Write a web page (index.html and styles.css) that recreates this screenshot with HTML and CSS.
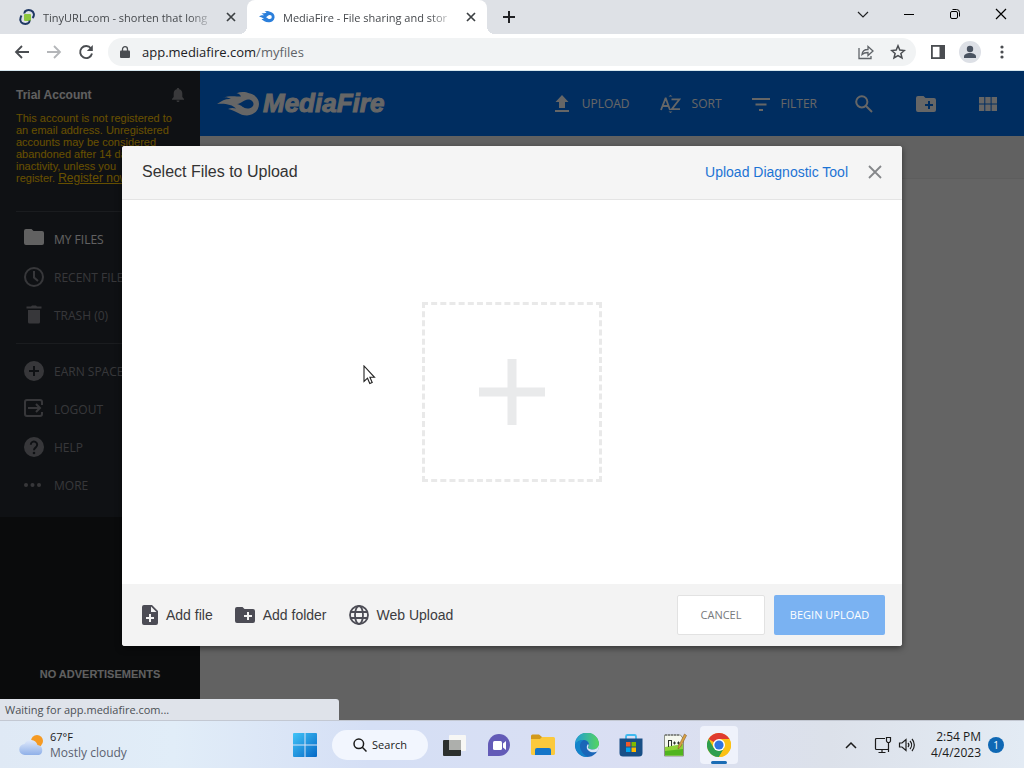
FILE: index.html
```html
<!DOCTYPE html>
<html lang="en">
<head>
    <meta charset="UTF-8">
    <meta name="viewport" content="width=device-width, initial-scale=1.0">
    <title>MediaFire - File sharing and storage made simple</title>
    <link rel="stylesheet" href="styles.css">
</head>
<body>
    <!-- Browser tabs -->
    <div class="tabstrip">
        <div class="tab">
            <svg class="favicon" viewBox="0 0 16 16" width="16" height="16">
                <rect x="5" y="5" width="7" height="7" rx="1" fill="#8cc63e"/>
                <path d="M5.500 4.500C5 1.500 9 .5 12 1.500s4 5 1.500 7.500M10.500 11.500c.5 3-3.500 4-6.500 3S.5 10 2.500 6.500" fill="none" stroke="#1f3864" stroke-width="2"/>
            </svg>
            <span class="tab-title">TinyURL.com - shorten that long</span>
            <button class="tab-close" aria-label="Close tab">
                <svg viewBox="0 0 10 10" width="10" height="10"><path d="M1 1l8 8M9 1L1 9" stroke="#3c4043" stroke-width="1.700"/></svg>
            </button>
        </div>
        <div class="tab active">
            <svg class="favicon" viewBox="0 0 16 16" width="16" height="16">
                <path fill-rule="evenodd" d="M0 7.500C1.500 6.300 3.500 6 5 6.300 4.300 5.500 3.500 5 2.500 4.800 4.500 4 6 4.100 7.500 4 7 3.200 6.500 2.900 5.500 2.600c2-.8 4-.6 5.500.1A5.300 5.300 0 1 1 9.500 13.200C6 13.200 4.500 11.500 2.500 10.500c1-.5 2-.5 3-.2C4 9 2 8 0 7.500zM7 8.200c1.500.6 2.300 1.900 3.800 1.900a2 2 0 0 0 0-4C9.300 6.100 8.500 7.600 7 8.200z" fill="#2b7fdb"/>
            </svg>
            <span class="tab-title">MediaFire - File sharing and stor</span>
            <button class="tab-close" aria-label="Close tab">
                <svg viewBox="0 0 10 10" width="10" height="10"><path d="M1 1l8 8M9 1L1 9" stroke="#3c4043" stroke-width="1.700"/></svg>
            </button>
        </div>
        <button class="new-tab" aria-label="New tab">
            <svg viewBox="0 0 12 12" width="12" height="12"><path d="M6 0v12M0 6h12" stroke="#202124" stroke-width="2"/></svg>
        </button>
        <div class="window-controls">
            <button aria-label="Search tabs"><svg viewBox="0 0 12 12" width="12" height="12"><path d="M1 4l5 5 5-5" fill="none" stroke="#202124" stroke-width="1.200"/></svg></button>
            <button aria-label="Minimize"><svg viewBox="0 0 12 12" width="12" height="12"><path d="M1 6.500h10" stroke="#000"/></svg></button>
            <button aria-label="Restore"><svg viewBox="0 0 12 12" width="12" height="12"><rect x="1.500" y="3.500" width="7" height="7" rx="1.500" fill="none" stroke="#000"/><path d="M3.500 1.500h4a3 3 0 0 1 3 3v4" fill="none" stroke="#000"/></svg></button>
            <button aria-label="Close"><svg viewBox="0 0 12 12" width="12" height="12"><path d="M1 1l10 10M11 1L1 11" stroke="#000" stroke-width="1.200"/></svg></button>
        </div>
    </div>

    <!-- Address bar -->
    <div class="toolbar">
        <button aria-label="Back"><svg viewBox="0 0 16 16" width="16" height="16"><path d="M15 8H2M8 2L2 8l6 6" fill="none" stroke="#4a4d51" stroke-width="1.800"/></svg></button>
        <button aria-label="Forward"><svg viewBox="0 0 16 16" width="16" height="16"><path d="M1 8h13M8 2l6 6-6 6" fill="none" stroke="#b4b6b9" stroke-width="1.800"/></svg></button>
        <button aria-label="Reload"><svg viewBox="0 0 16 16" width="16" height="16"><path d="M13 4.500A6 6 0 1 0 14 9.500" fill="none" stroke="#4a4d51" stroke-width="1.900"/><path d="M14.800 1v6h-6z" fill="#4a4d51"/></svg></button>
        <div class="omnibox">
            <svg viewBox="0 0 10 12" width="10" height="12"><rect x="0" y="4.500" width="10" height="7.500" rx="1" fill="#4a4d51"/><path d="M2.500 5V3.200a2.500 2.500 0 0 1 5 0V5" fill="none" stroke="#4a4d51" stroke-width="1.300"/></svg>
            <span class="url">app.mediafire.com<span>/myfiles</span></span>
            <button aria-label="Share"><svg viewBox="0 0 16 16" width="16" height="16"><path d="M1 4v10.500h12V12M4 10.500c.3-3.500 2.500-5 6-5V2.500l5 4.500-5 4.500v-3c-2.700 0-4.500.5-6 2z" fill="none" stroke="#5f6368" stroke-width="1.300"/></svg></button>
            <button aria-label="Bookmark"><svg viewBox="0 0 16 16" width="16" height="16"><path d="M8 1.800l1.800 4.300 4.600.4-3.500 3 1.100 4.500L8 11.600 4 14l1.100-4.500-3.500-3 4.600-.4z" fill="none" stroke="#4a4d51" stroke-width="1.500"/></svg></button>
        </div>
        <button aria-label="Side panel"><svg viewBox="0 0 16 16" width="16" height="16"><rect x="1.900" y="1.900" width="12.200" height="12.200" fill="none" stroke="#4a4d51" stroke-width="1.800"/><path d="M9.500 2H14v12H9.500z" fill="#4a4d51"/></svg></button>
        <button aria-label="Profile"><svg viewBox="0 0 22 22" width="22" height="22"><circle cx="11" cy="11" r="11" fill="#dde0e6"/><circle cx="11" cy="8" r="3.200" fill="#4a5361"/><path d="M5 17v-1.500c0-2.300 3-3.500 6-3.500s6 1.200 6 3.500V17z" fill="#4a5361"/></svg></button>
        <button aria-label="Menu"><svg viewBox="0 0 16 16" width="16" height="16" fill="#4a4d51"><circle cx="8" cy="3" r="1.600"/><circle cx="8" cy="8" r="1.600"/><circle cx="8" cy="13" r="1.600"/></svg></button>
    </div>

    <!-- MediaFire -->
    <div class="page">
        <aside class="sidebar">
            <div class="sidebar-panel">
                <div class="account">
                    <div class="account-head">
                        <h2>Trial Account</h2>
                        <svg viewBox="0 0 12 14" width="12" height="14" fill="#8e9094"><path d="M6 0c.8 0 1.200.5 1.200 1.200C9.300 1.700 10.300 3.500 10.300 5.500V9L12 11v.8H0V11l1.700-2V5.500c0-2 1-3.800 3.100-4.300C4.800.5 5.200 0 6 0zM4.500 12.500h3a1.500 1.500 0 0 1-3 0z"/></svg>
                    </div>
                    <p class="warning">This account is not registered to an email address. Unregistered accounts may be considered abandoned after 14 days of inactivity, unless you<br>register. <a href="#">Register now</a></p>
                </div>
                <ul class="menu">
                    <li><a class="current" href="#"><svg viewBox="0 0 20 20" width="20" height="20" fill="currentColor"><path d="M2 0h5.500l2 2H18a2 2 0 0 1 2 2v10a2 2 0 0 1-2 2H2a2 2 0 0 1-2-2V2a2 2 0 0 1 2-2z"/></svg>MY FILES</a></li>
                    <li><a href="#"><svg viewBox="0 0 20 20" width="20" height="20" fill="none" stroke="currentColor" stroke-width="2"><circle cx="10" cy="10" r="9"/><path d="M10 4v6.500l4 3.500"/></svg>RECENT FILES</a></li>
                    <li><a href="#"><svg viewBox="0 0 20 20" width="20" height="20" fill="currentColor"><path d="M4 5h12v12a1.500 1.500 0 0 1-1.500 1.500h-9A1.500 1.500 0 0 1 4 17zM2.500 1.500H7l1-1h4l1 1h4.500v2h-15z"/></svg>TRASH (0)</a></li>
                </ul>
                <ul class="menu">
                    <li><a href="#"><svg viewBox="0 0 20 20" width="20" height="20" fill="currentColor"><path fill-rule="evenodd" d="M10 0a10 10 0 1 1 0 20 10 10 0 0 1 0-20zM9 5v4H5v2h4v4h2v-4h4V9h-4V5z"/></svg>EARN SPACE</a></li>
                    <li><a href="#"><svg viewBox="0 0 20 20" width="20" height="20" fill="none" stroke="currentColor" stroke-width="2"><path d="M18 6V3a2 2 0 0 0-2-2H3a2 2 0 0 0-2 2v12a2 2 0 0 0 2 2h13a2 2 0 0 0 2-2v-2M4 9h12M12 5l4 4-4 4"/></svg>LOGOUT</a></li>
                    <li><a href="#"><svg viewBox="0 0 20 20" width="20" height="20"><circle cx="10" cy="10" r="10" fill="currentColor"/><path d="M6.800 7.800a3.200 3.200 0 1 1 5 2.500C10.600 11.200 10 11.600 10 13.300" fill="none" stroke="#272b33" stroke-width="2"/><circle cx="10" cy="16" r="1.300" fill="#272b33"/></svg>HELP</a></li>
                    <li><a href="#"><svg viewBox="0 0 20 20" width="20" height="20" fill="currentColor"><circle cx="2" cy="10" r="2"/><circle cx="8.500" cy="10" r="2"/><circle cx="15" cy="10" r="2"/></svg>MORE</a></li>
                </ul>
            </div>
            <p class="no-ads">NO ADVERTISEMENTS</p>
        </aside>

        <main class="main">
            <header class="header">
                <a class="logo" href="#">
                    <svg viewBox="0 0 42 24" width="42" height="24"><path fill-rule="evenodd" d="M0 12C5 8.500 9 6.500 14 7 11.500 5.500 8 5 6 5.500 12 3.500 19 4.500 24 4.500 23.500 2.500 21.500 1.500 19.500 1.200 24-.5 29 0 32 1.200 38 2.500 42 6.500 42 12S37.500 23.500 30 23.500C22 23.500 19.500 18.500 11 17c3-1.500 6-1 8-.5C15.500 12.500 7 11 0 12zm20 0c5 1 6 4.500 10.500 4.500 3.500 0 6-2 6-4.500s-2.500-4.500-5.500-4.500c-4 0-6 4-11 4.500z" fill="#fff"/></svg>
                    <span>MediaFire</span>
                </a>
                <nav class="actions">
                    <button><svg viewBox="0 0 18 18" width="18" height="18" fill="#fff"><path d="M9 0l6.500 7H12v6H6V7H2.500zM2 15h14v2H2z"/></svg>UPLOAD</button>
                    <button><svg class="az" viewBox="0 0 21 18" width="21" height="18" fill="none" stroke="#fff" stroke-width="1.800"><path d="M1 15L5.500 3.500h.3L10 15M2.500 11h6.300M11.500 4.300h8L11.800 14.200H20"/><path d="M8.500 1.500L10.500 0l2 1.500zM8.500 16.500l2 1.500 2-1.500z" fill="#fff" stroke="none"/></svg>SORT</button>
                    <button><svg viewBox="0 0 18 18" width="18" height="18" fill="#fff"><path d="M0 3h18v2H0zM3.500 8.500h11v2h-11zM7 14h4v2H7z"/></svg>FILTER</button>
                    <button class="icon-only" aria-label="Search"><svg viewBox="0 0 18 18" width="18" height="18" fill="none" stroke="#fff" stroke-width="2"><circle cx="6.800" cy="6.800" r="5.600"/><path d="M11 11l6 6"/></svg></button>
                    <button class="icon-only" aria-label="New folder"><svg viewBox="0 0 20 16" width="20" height="16" fill="#fff"><path fill-rule="evenodd" d="M2 0h5.500l2 2H18a2 2 0 0 1 2 2v10a2 2 0 0 1-2 2H2a2 2 0 0 1-2-2V2a2 2 0 0 1 2-2zM12 5v3H9v2h3v3h2v-3h3V8h-3V5z"/></svg></button>
                    <button class="icon-only" aria-label="Grid view"><svg viewBox="0 0 18 14" width="18" height="14" fill="#fff"><path d="M0 0h5.300v6.500H0zM6.300 0h5.300v6.500H6.300zM12.600 0H18v6.500h-5.400zM0 7.500h5.300V14H0zM6.300 7.500h5.300V14H6.300zM12.600 7.500H18V14h-5.400z"/></svg></button>
                </nav>
            </header>
            <div class="crumbs"></div>
            <div class="files">
                <div class="folders"></div>
                <div class="file-list"></div>
            </div>
        </main>

        <div class="overlay">
            <section class="dialog" role="dialog" aria-labelledby="dialog-title">
                <header class="dialog-head">
                    <h1 id="dialog-title">Select Files to Upload</h1>
                    <a href="#">Upload Diagnostic Tool</a>
                    <button aria-label="Close dialog"><svg viewBox="0 0 14 14" width="14" height="14"><path d="M1 1l12 12M13 1L1 13" stroke="#85878a" stroke-width="1.800"/></svg></button>
                </header>
                <div class="dialog-body">
                    <button class="dropzone" aria-label="Select files">
                        <svg viewBox="0 0 66 66" width="66" height="66"><path d="M33 0v66M0 33h66" stroke="#e9eaeb" stroke-width="9"/></svg>
                    </button>
                </div>
                <footer class="dialog-foot">
                    <button class="source"><svg viewBox="0 0 16 20" width="16" height="20"><path fill-rule="evenodd" d="M2 0h8l6 6v12a2 2 0 0 1-2 2H2a2 2 0 0 1-2-2V2a2 2 0 0 1 2-2zm7 1.500V7h5.500zM7 9v3H4v2h3v3h2v-3h3v-2H9V9z" fill="#4c4c55"/></svg>Add file</button>
                    <button class="source"><svg viewBox="0 0 20 16" width="20" height="16"><path fill-rule="evenodd" d="M2 0h5.500l2 2H18a2 2 0 0 1 2 2v10a2 2 0 0 1-2 2H2a2 2 0 0 1-2-2V2a2 2 0 0 1 2-2zM12 5v3H9v2h3v3h2v-3h3V8h-3V5z" fill="#4c4c55"/></svg>Add folder</button>
                    <button class="source"><svg viewBox="0 0 20 20" width="20" height="20" fill="none" stroke="#4c4c55" stroke-width="1.800"><circle cx="10" cy="10" r="9"/><ellipse cx="10" cy="10" rx="4" ry="9"/><path d="M1.500 7h17M1.500 13h17"/></svg>Web Upload</button>
                    <div class="dialog-buttons">
                        <button class="cancel">CANCEL</button>
                        <button class="begin">BEGIN UPLOAD</button>
                    </div>
                </footer>
            </section>
        </div>

        <div class="status">Waiting for app.mediafire.com...</div>
    </div>

    <!-- Taskbar -->
    <div class="taskbar">
        <div class="weather">
            <svg viewBox="0 0 26 22" width="26" height="22">
                <defs><linearGradient id="cloud" x1="0" y1="0" x2="0" y2="1"><stop offset="0" stop-color="#dfe9fb"/><stop offset="1" stop-color="#8fb0e8"/></linearGradient></defs>
                <circle cx="18" cy="7" r="6" fill="#f59a23"/>
                <path d="M6 21a5.500 5.500 0 0 1-.5-11A7 7 0 0 1 18.500 11 5.200 5.200 0 0 1 20 21z" fill="url(#cloud)"/>
            </svg>
            <div class="weather-text">67°F<span>Mostly cloudy</span></div>
        </div>
        <div class="apps">
            <button aria-label="Start">
                <svg viewBox="0 0 24 24" width="24" height="24">
                    <defs><linearGradient id="win" x1="0" y1="0" x2="1" y2="1"><stop offset="0" stop-color="#42c4f8"/><stop offset="1" stop-color="#0568c6"/></linearGradient></defs>
                    <path d="M1 0h10.500v11.500H0V1a1 1 0 0 1 1-1zM12.500 0H23a1 1 0 0 1 1 1v10.500H12.500zM0 12.500h11.500V24H1a1 1 0 0 1-1-1zM12.500 12.500H24V23a1 1 0 0 1-1 1H12.500z" fill="url(#win)"/>
                </svg>
            </button>
            <button class="search">
                <svg viewBox="0 0 14 14" width="14" height="14" fill="none" stroke="#1b1b1b" stroke-width="1.500"><circle cx="5.800" cy="5.800" r="4.800"/><path d="M9.300 9.300l4.200 4.200"/></svg>Search
            </button>
            <button aria-label="Task view">
                <svg viewBox="0 0 24 24" width="24" height="24"><rect x="6" y="2" width="17" height="16" rx="1" fill="#f7f7f5"/><rect x="0" y="7" width="18" height="16" rx="1" fill="#2c302e"/><path d="M6 7h12v10H6z" fill="#adafac"/></svg>
            </button>
            <button aria-label="Chat">
                <svg viewBox="0 0 24 24" width="24" height="24"><path d="M12 1a11 11 0 1 1 0 22H1V12A11 11 0 0 1 12 1z" fill="#635bb7"/><rect x="6" y="8" width="9" height="9" rx="1.500" fill="#fff"/><path d="M16 10.500l3-2.500v9l-3-2.500z" fill="#fff"/></svg>
            </button>
            <button aria-label="File Explorer">
                <svg viewBox="0 0 24 24" width="24" height="24"><path d="M0 3a1.500 1.500 0 0 1 1.500-1.500H8L11 4v4H0z" fill="#d39a1c"/><path d="M0 6h9l2-2h11.500A1.500 1.500 0 0 1 24 5.500v15a1.500 1.500 0 0 1-1.500 1.500h-21A1.500 1.500 0 0 1 0 20.500z" fill="#fbc93c"/><path d="M4 22v-5a2 2 0 0 1 2-2h12a2 2 0 0 1 2 2v5z" fill="#1475c8"/></svg>
            </button>
            <button aria-label="Edge">
                <svg viewBox="0 0 24 24" width="24" height="24">
                    <defs><linearGradient id="edge" x1="0" y1="0" x2="1" y2="0"><stop offset="0" stop-color="#219bd8"/><stop offset="1" stop-color="#55d55f"/></linearGradient></defs>
                    <circle cx="12" cy="12" r="12" fill="#1a66b8"/>
                    <path d="M0 12A12 12 0 0 1 24 11c0 4-3 5.500-6 5.500-3.500 0-5-1-5-2 0-.8 1-1.200 1-3C14 9 11.500 7 8.500 7 4.500 7 1 9.500 0 12z" fill="url(#edge)"/>
                    <path d="M13 11c-1 1.200-1.200 2.300-1.200 3.500 0 2.500 3 4.800 6.700 4.800 1.700 0 2.900-.4 4-1.100A12 12 0 0 0 24 14v-2c-1 3.200-3.600 4.500-6 4.500-3.500 0-5.600-1.300-5-2.500.7-1 .9-2 0-3z" fill="#dae5f6"/>
                    <path d="M0 12c1-3 4.500-5 8.500-5C5.500 9 4 12 5.500 16s4 6.500 7.500 8C5 24.500 0 18 0 12z" fill="#1384cb"/>
                </svg>
            </button>
            <button aria-label="Microsoft Store">
                <svg viewBox="0 0 24 24" width="24" height="24"><path d="M7 6V3.500A1.500 1.500 0 0 1 8.500 2h7A1.500 1.500 0 0 1 17 3.500V6" fill="none" stroke="#3fb9ef" stroke-width="1.800"/><path d="M.5 5.500h23V20a3.500 3.500 0 0 1-3.500 3.500H4A3.500 3.500 0 0 1 .5 20z" fill="#184f86"/><path d="M7 9h4.500v4.500H7z" fill="#f15a29"/><path d="M12.500 9H17v4.500h-4.500z" fill="#7fba00"/><path d="M7 14.500h4.500V19H7z" fill="#00a4ef"/><path d="M12.500 14.500H17V19h-4.500z" fill="#ffb900"/></svg>
            </button>
            <button aria-label="Notepad++">
                <svg viewBox="0 0 24 24" width="24" height="24"><path d="M1.500 2h16l3 4v17h-19z" fill="#f5f8ef" stroke="#8b9187"/><path d="M2 14l18-3v11.500H2z" fill="#8ed238"/><path d="M2 18l18-2v6.500H2z" fill="#50b51e"/><path d="M5.500 7v7M8.500 7v6M5.500 7.500h3M10 10h3M11.500 8.500v3M14 10h3M15.500 8.500v3" stroke="#2c3229" fill="none"/><path d="M3 1v2M6 1v2M9 1v2M12 1v2M15 1v2" stroke="#555"/><path d="M21.500 1l2 1.500-6 11.500-2.500 2 .5-3z" fill="#d9a443" stroke="#8c5b28" stroke-width=".6"/></svg>
            </button>
            <button class="running" aria-label="Chrome">
                <svg viewBox="0 0 24 24" width="24" height="24"><circle cx="12" cy="12" r="12" fill="#fbc116"/><path d="M12 12L1.600 6A12 12 0 0 1 22.400 6z" fill="#df3a2f"/><path d="M1.600 6A12 12 0 0 0 12 24l5.200-9L12 12 6.800 15z" fill="#2f9f4f"/><path d="M12 6h10.400a12 12 0 0 1-10.400 18l5.200-9z" fill="#fbc116"/><circle cx="12" cy="12" r="6" fill="#fff"/><circle cx="12" cy="12" r="4.600" fill="#2f74e0"/></svg>
            </button>
        </div>
        <div class="tray">
            <button aria-label="Show hidden icons"><svg viewBox="0 0 12 12" width="12" height="12"><path d="M1 9l5-5 5 5" fill="none" stroke="#1b1b1b" stroke-width="1.500"/></svg></button>
            <button class="system" aria-label="Network and volume">
                <svg viewBox="0 0 18 18" width="18" height="18" fill="none" stroke="#1b1b1b" stroke-width="1.200"><path d="M11 2.500H2.500a1 1 0 0 0-1 1v9a1 1 0 0 0 1 1h11a1 1 0 0 0 1-1V7M4.500 16.500h7M8 13.500v3M12.500 1.500h4v3.500l-1 1.500h-2l-1-1.500zM14.500 7v9"/></svg>
                <svg viewBox="0 0 18 16" width="18" height="16" fill="none" stroke="#1b1b1b" stroke-width="1.200"><path d="M1.500 6h2.500l4-3.500v11L4 10H1.500zM10 6a3 3 0 0 1 0 4M12 4a6 6 0 0 1 0 8M14 2a9 9 0 0 1 0 12"/></svg>
            </button>
            <div class="clock">2:54 PM<span>4/4/2023</span></div>
            <span class="badge">1</span>
        </div>
    </div>

    <svg class="cursor" viewBox="0 0 13 20" width="13" height="20"><path d="M1 1v15.500l3.500-3.300 2.300 5.300 2.400-1-2.300-5.200H11.500z" fill="#fff" stroke="#222" stroke-width="1.100"/></svg>
</body>
</html>
```

FILE: styles.css
```css
* {
    box-sizing: border-box;
}
body {
    margin: 0;
    height: 100vh;
    display: flex;
    flex-direction: column;
    overflow: hidden;
    font-family: "Liberation Sans", Arial, sans-serif;
    font-size: 14px;
    color: #333;
}
button {
    display: flex;
    align-items: center;
    justify-content: center;
    padding: 0;
    border: none;
    background: none;
    font: inherit;
    color: inherit;
    cursor: pointer;
}
a {
    color: inherit;
    text-decoration: none;
}
h1, h2, p, ul {
    margin: 0;
    padding: 0;
}
svg {
    flex-shrink: 0;
}

/* browser */
.tabstrip, .toolbar, .status, .taskbar {
    font-family: "Open Sans", "Segoe UI", sans-serif;
    font-size: 11px;
}
.tabstrip {
    display: flex;
    height: 34px;
    padding-left: 7px;
    background: #dee1e6;
}
.tab {
    position: relative;
    display: flex;
    align-items: center;
    gap: 8px;
    width: 240px;
    padding: 0 8px 0 12px;
    color: #45484c;
}
.tab.active {
    background: #fff;
    border-radius: 8px 8px 0 0;
}
.tab.active::before, .tab.active::after {
    content: "";
    position: absolute;
    bottom: 0;
    width: 8px;
    height: 8px;
}
.tab.active::before {
    left: -8px;
    background: radial-gradient(circle at 0 0, #dee1e6 8px, #fff 8px);
}
.tab.active::after {
    right: -8px;
    background: radial-gradient(circle at 100% 0, #dee1e6 8px, #fff 8px);
}
.tab-title {
    flex: 1;
    white-space: nowrap;
    mask-image: linear-gradient(to right, #000 85%, transparent);
}
.tab-close {
    width: 16px;
    height: 16px;
}
.new-tab {
    width: 28px;
    margin-left: 8px;
}
.window-controls {
    display: flex;
    margin-left: auto;
}
.window-controls button {
    width: 46px;
    height: 28px;
}
.toolbar {
    display: flex;
    align-items: center;
    gap: 4px;
    height: 37px;
    padding: 0 8px;
    background: #fff;
    border-bottom: 1px solid #d5e6ee;
}
.toolbar button {
    width: 28px;
    height: 28px;
}
.omnibox {
    flex: 1;
    display: flex;
    align-items: center;
    gap: 4px;
    height: 28px;
    margin: 0 4px;
    padding: 0 4px 0 12px;
    border-radius: 14px;
    background: #f1f3f4;
}
.url {
    flex: 1;
    margin-left: 8px;
    font-size: 13px;
    color: #202124;
}
.url span {
    color: #5f6368;
}

/* page */
.page {
    position: relative;
    flex: 1;
    display: flex;
    min-height: 0;
    overflow: hidden;
}
.sidebar {
    display: flex;
    flex-direction: column;
    justify-content: space-between;
    width: 200px;
    background: #191d20;
}
.sidebar-panel {
    padding: 16px 16px 4px;
    background: #272b33;
}
.account {
    height: 124px;
}
.account-head {
    display: flex;
    justify-content: space-between;
    align-items: center;
    height: 16px;
    color: #f0f0f0;
}
.account-head h2 {
    font-size: 12px;
    font-weight: bold;
}
.warning {
    margin-top: 9px;
    font-size: 11px;
    line-height: 12px;
    color: #ffc800;
}
.warning a {
    font-size: 12px;
    text-decoration: underline;
}
.menu {
    list-style: none;
    padding: 8px 0 9px;
    border-top: 1px solid #42464e;
}
.menu a {
    display: flex;
    align-items: center;
    gap: 10px;
    height: 38px;
    padding-left: 8px;
    font-family: "Open Sans", "Segoe UI", sans-serif;
    font-size: 12px;
    color: #898b91;
    white-space: nowrap;
}
.menu .current {
    color: #f2f2f2;
}
.no-ads {
    padding-bottom: 40px;
    font-size: 11px;
    font-weight: bold;
    line-height: 12px;
    text-align: center;
    color: #f0f0f0;
}
.main {
    flex: 1;
    display: flex;
    flex-direction: column;
}
.header {
    display: flex;
    align-items: center;
    justify-content: space-between;
    height: 65px;
    padding: 0 27px 0 17px;
    background: #0070f0;
    color: #fff;
}
.logo {
    display: flex;
    align-items: center;
    gap: 4px;
    font-size: 26px;
    font-style: italic;
    font-weight: bold;
    -webkit-text-stroke: 1px #fff;
}
.actions {
    display: flex;
    align-items: center;
    gap: 30px;
    font-family: "Open Sans", "Segoe UI", sans-serif;
    font-size: 12px;
}
.actions button {
    gap: 11px;
}
.actions .icon-only {
    margin-left: 8px;
}
.actions .icon-only + .icon-only {
    margin-left: 13px;
}
.crumbs {
    height: 43px;
    background: #f3f3f3;
    border-bottom: 1px solid #e9e9e9;
}
.files {
    flex: 1;
    display: flex;
}
.folders {
    width: 200px;
    background: #f4f4f4;
}
.file-list {
    flex: 1;
    background: #fafafa;
}

/* upload dialog */
.overlay {
    position: absolute;
    inset: 0;
    display: flex;
    align-items: center;
    justify-content: center;
    background: rgba(0, 0, 0, 0.6);
}
.dialog {
    display: flex;
    flex-direction: column;
    width: 780px;
    max-width: 94%;
    height: 500px;
    border-radius: 3px;
    overflow: hidden;
    background: #fff;
    box-shadow: 0 2px 6px rgba(0, 0, 0, 0.5);
}
.dialog-head {
    display: flex;
    align-items: center;
    height: 54px;
    padding: 0 20px;
    background: #f5f5f5;
    border-bottom: 1px solid #e4e4e4;
}
.dialog-head h1 {
    flex: 1;
    font-size: 16px;
    font-weight: normal;
    color: #333;
}
.dialog-head a {
    margin-right: 20px;
    color: #1c73d4;
}
.dialog-body {
    flex: 1;
    display: flex;
    align-items: center;
    justify-content: center;
}
.dropzone {
    width: 180px;
    height: 180px;
    border: 3px dashed #e9e9e9;
}
.dialog-foot {
    display: flex;
    align-items: center;
    gap: 22px;
    height: 62px;
    padding: 0 17px 0 20px;
    background: #f3f3f3;
    color: #3c3c40;
}
.source {
    gap: 8px;
}
.dialog-buttons {
    display: flex;
    gap: 9px;
    margin-left: auto;
    font-family: "Open Sans", "Segoe UI", sans-serif;
    font-size: 11px;
}
.cancel, .begin {
    height: 40px;
    border-radius: 2px;
}
.cancel {
    width: 88px;
    border: 1px solid #e2e2e2;
    background: #fff;
    color: #77797c;
}
.begin {
    width: 111px;
    background: #7ab2f2;
    color: #fff;
}
.status {
    position: absolute;
    left: 0;
    bottom: 0;
    width: 339px;
    height: 21px;
    padding-left: 5px;
    border-radius: 0 3px 0 0;
    line-height: 21px;
    background: #dfe3ea;
    color: #4c5055;
}

/* taskbar */
.taskbar {
    display: grid;
    grid-template-columns: 1fr auto 1fr;
    align-items: center;
    height: 48px;
    border-top: 1px solid #c3c8d2;
    background: linear-gradient(to right, #dfe9f5, #e1edf8 17%, #d5dff5 36%, #dadff3 62%, #dce1ea 81%, #e3ebf4);
    color: #1b1b1b;
}
.weather {
    display: flex;
    align-items: center;
    gap: 5px;
    padding-left: 19px;
    line-height: 16px;
}
.weather-text span, .clock span {
    display: block;
}
.weather-text span {
    font-size: 12px;
    color: #5b6270;
}
.apps {
    display: flex;
    align-items: center;
    gap: 6px;
}
.apps button {
    width: 38px;
    height: 38px;
}
.apps .search {
    gap: 5px;
    width: 96px;
    height: 30px;
    margin: 0 2px;
    border-radius: 15px;
    background: #f2f6fe;
}
.apps .running {
    position: relative;
    border-radius: 4px;
    background: #eff2fb;
}
.running::after {
    content: "";
    position: absolute;
    bottom: 0;
    width: 16px;
    height: 3px;
    border-radius: 2px;
    background: #1a6cb5;
}
.tray {
    display: flex;
    align-items: center;
    justify-content: flex-end;
    padding-right: 20px;
}
.system {
    gap: 6px;
    margin: 0 15px 0 17px;
}
.clock {
    font-size: 12px;
    line-height: 16px;
    text-align: right;
}
.badge {
    width: 16px;
    height: 16px;
    margin-left: 7px;
    border-radius: 50%;
    background: #0f68b4;
    color: #fff;
    font-size: 10px;
    line-height: 16px;
    text-align: center;
}
.cursor {
    position: absolute;
    left: 363px;
    top: 365px;
    pointer-events: none;
}
```
